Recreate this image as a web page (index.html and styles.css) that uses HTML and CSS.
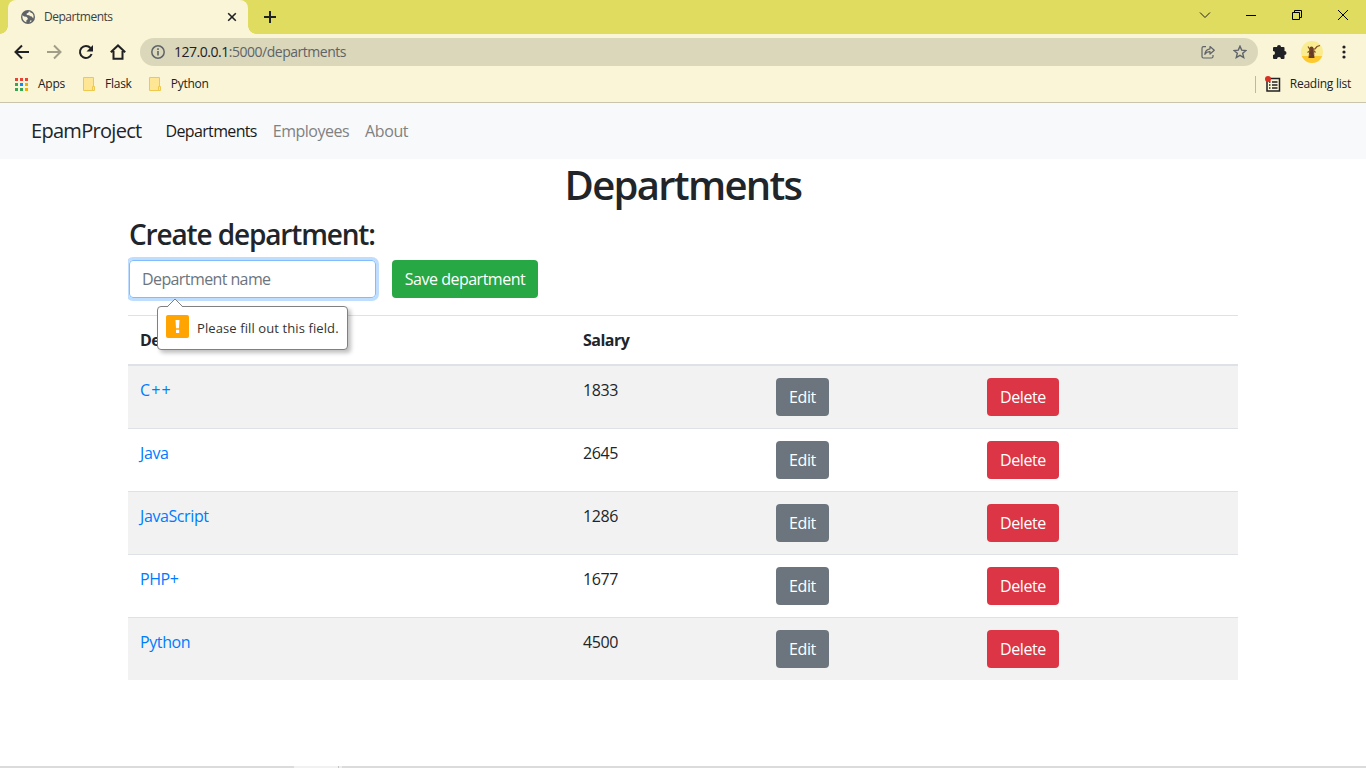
FILE: index.html
```html
<!DOCTYPE html>
<html lang="en">
<head>
<meta charset="utf-8">
<title>Departments</title>
<link rel="stylesheet" href="styles.css">
</head>
<body>
<div class="window">
  <header class="tabstrip">
    <div class="tab">
      <svg class="globe" width="14" height="14" viewBox="0 0 14 14"><circle cx="7" cy="7" r="7" fill="#5f6368"/><path d="M1.4 5.2 3.2 6.6 5.4 6.8 6.8 8.2 6.6 9.6 5.4 10.2 5.3 12.3C3 11.6 1.4 9.5 1.4 7zM7.8 1.4 7.2 3 5.6 3.6 5.8 5 8 5.2 9.4 6.2 10.8 6.4 12.2 8.4C12.9 6 12.6 4.600 11 2.900L9.600 2.800 9.300 1.700zM8.500 12.400 10.800 11 9.700 10z" fill="#faf5d6"/></svg>
      <span class="tab-title">Departments</span>
      <svg class="tab-close" width="10" height="10" viewBox="0 0 10 10"><path d="M1.200 1.200 8.800 8.800M8.800 1.200 1.200 8.800" stroke="#202124" stroke-width="1.600"/></svg>
    </div>
    <svg class="new-tab" width="12" height="12" viewBox="0 0 12 12"><path d="M6 0V12M0 6H12" stroke="#202124" stroke-width="2"/></svg>
    <div class="captions">
      <svg width="12" height="12" viewBox="0 0 12 12"><path d="M1 3.500 6 8.500 11 3.500" fill="none" stroke="#222"/></svg>
      <svg width="12" height="12" viewBox="0 0 12 12"><path d="M1 6.500H11" stroke="#000"/></svg>
      <svg width="12" height="12" viewBox="0 0 12 12"><path d="M1.500 3.500H8.500V10.500H1.500zM3.500 3.500V1.500H10.500V8.500H8.500" fill="none" stroke="#000"/></svg>
      <svg width="12" height="12" viewBox="0 0 12 12"><path d="M1 1 11 11M11 1 1 11" stroke="#000"/></svg>
    </div>
  </header>

  <div class="toolbar">
    <svg width="16" height="16" viewBox="0 0 16 16"><path d="M15 8H2M8 1.500 1.500 8 8 14.500" fill="none" stroke="#202124" stroke-width="2"/></svg>
    <svg width="16" height="16" viewBox="0 0 16 16"><path d="M1 8H14M8 1.500 14.500 8 8 14.500" fill="none" stroke="#a09d89" stroke-width="2"/></svg>
    <svg width="16" height="16" viewBox="0 0 16 16"><path d="M13.600 10A6 6 0 1 1 12.500 4" fill="none" stroke="#202124" stroke-width="2"/><path d="M15 1V7.500H8.500z" fill="#202124"/></svg>
    <svg width="16" height="16" viewBox="0 0 16 16"><path d="M.8 8.300 8 1.500 15.200 8.300M3.500 7V14.800H12.500V7" fill="none" stroke="#202124" stroke-width="2"/></svg>
    <div class="omnibox">
      <svg width="14" height="14" viewBox="0 0 14 14"><circle cx="7" cy="7" r="6.200" fill="none" stroke="#5f6368" stroke-width="1.500"/><path d="M7 6V10.500M7 3.300V4.900" stroke="#5f6368" stroke-width="1.600"/></svg>
      <span class="url"><b>127.0.0.1</b>:5000/departments</span>
      <svg class="share" width="14" height="14" viewBox="0 0 14 14"><path d="M5 1.700H2.500A1.500 1.500 0 0 0 1 3.200V11.500A1.500 1.500 0 0 0 2.500 13H10.500A1.500 1.500 0 0 0 12 11.500V10M9 1.500 13.300 5.200 9 9V6.700C6.500 6.600 5 7.500 3.800 9.300 4.200 6 6 4.200 9 3.800z" fill="none" stroke="#5f6368" stroke-width="1.200" stroke-linejoin="round"/></svg>
      <svg width="14" height="14" viewBox="0 0 14 14"><path d="M7 1.200 8.700 5.100 13 5.500 9.700 8.300 10.700 12.500 7 10.300 3.300 12.500 4.300 8.300 1 5.500 5.300 5.100z" fill="none" stroke="#5f6368" stroke-width="1.400"/></svg>
    </div>
    <svg class="puzzle" width="16" height="16" viewBox="0 0 16 16"><path d="M2 3H5A2 2 0 0 1 9 3H11.500A1 1 0 0 1 12.500 4V7A2 2 0 0 1 12.500 11V14A1 1 0 0 1 11.500 15H9A2 2 0 0 0 5 15H2A1 1 0 0 1 1 14V11A2 2 0 0 0 1 7V4A1 1 0 0 1 2 3z" fill="#202124"/></svg>
    <svg class="avatar" width="22" height="22" viewBox="0 0 22 22"><defs><clipPath id="disc"><circle cx="11" cy="11" r="11"/></clipPath></defs><g clip-path="url(#disc)"><path d="M0 0H22V22H0z" fill="#f9ec91"/><path d="M0 15H22V22H0z" fill="#fdc92e"/><path d="M8.500 8 12.500 8 13.500 17H7.500z" fill="#663c26"/><path d="M7 5.500 9 8.500 14 8 16 5.500 19 4.500M6.500 11.500 9.500 9.500M12.500 9.500 14.500 11.500" stroke="#86502e" stroke-width="1.300" fill="none"/><circle cx="10.500" cy="7.500" r="2" fill="#704128"/><path d="M8 14H9.500M12 13H13.500" stroke="#b95a32"/></g></svg>
    <svg class="dots" width="4" height="14" viewBox="0 0 4 14"><g fill="#202124"><circle cx="2" cy="2" r="1.600"/><circle cx="2" cy="7" r="1.600"/><circle cx="2" cy="12" r="1.600"/></g></svg>
  </div>

  <div class="bookmarks">
    <svg width="13" height="13" viewBox="0 0 13 13"><path d="M0 0H3V3H0zM5 0H8V3H5zM10 0H13V3H10z" fill="#ea4335"/><path d="M0 5H3V8H0zM0 10H3V13H0zM5 10H8V13H5z" fill="#34a853"/><path d="M5 5H8V8H5z" fill="#1a86f3"/><path d="M10 5H13V8H10zM10 10H13V13H10z" fill="#f4b000"/></svg>
    <span class="bm-apps">Apps</span>
    <svg width="12" height="14" viewBox="0 0 12 14"><path d="M.5.5H10.500V13.500H.5z" fill="#ffe694" stroke="#efc94c"/><path d="M9.500 9.500H11.500V13.500H9.500z" fill="#ffe694" stroke="#efc94c"/></svg>
    <span class="bm-flask">Flask</span>
    <svg width="12" height="14" viewBox="0 0 12 14"><path d="M.5.5H10.500V13.500H.5z" fill="#ffe694" stroke="#efc94c"/><path d="M9.500 9.500H11.500V13.500H9.500z" fill="#ffe694" stroke="#efc94c"/></svg>
    <span class="bm-python">Python</span>
    <div class="reading">
      <svg width="16" height="17" viewBox="0 0 16 17"><path d="M2 2.500H14.500V15H2z" fill="none" stroke="#202124" stroke-width="1.500"/><path d="M4 6H5.500M7 6H12.500M4 9H5.500M7 9H12.500M4 12H5.500M7 12H12.500" stroke="#202124" stroke-width="1.300"/><circle cx="3" cy="3" r="3" fill="#d93025"/></svg>
      <span class="bm-reading">Reading list</span>
    </div>
  </div>

  <nav class="navbar">
    <a class="brand">EpamProject</a>
    <a class="nav-link active">Departments</a>
    <a class="nav-link nav-employees">Employees</a>
    <a class="nav-link nav-about">About</a>
  </nav>

  <main class="container">
    <h1>Departments</h1>
    <h3>Create department:</h3>
    <form class="create">
      <div class="field">
        <div class="input"><span>Department name</span></div>
        <div class="bubble">
          <svg class="bubble-arrow" width="18" height="10" viewBox="0 0 18 10"><path d="M1 9.500 9 1 17 9.500V10H1z" fill="#fff"/><path d="M1 9 9 1 17 9" fill="none" stroke="#808080"/></svg>
          <svg class="warning" width="23" height="23" viewBox="0 0 23 23"><rect width="23" height="23" rx="2" fill="#ffa400"/><path d="M9.500 5H13.500L13 13.300H10zM10 14.700H13.200V18H10z" fill="#fff"/></svg>
          <span>Please fill out this field.</span>
        </div>
      </div>
      <span class="btn save">Save department</span>
    </form>

    <div class="table">
      <div class="row head"><b>Department</b><b class="salary">Salary</b></div>
      <div class="row"><a class="wide">C++</a><span>1833</span><div><span class="btn edit">Edit</span></div><div><span class="btn delete">Delete</span></div></div>
      <div class="row"><a>Java</a><span>2645</span><div><span class="btn edit">Edit</span></div><div><span class="btn delete">Delete</span></div></div>
      <div class="row"><a>JavaScript</a><span>1286</span><div><span class="btn edit">Edit</span></div><div><span class="btn delete">Delete</span></div></div>
      <div class="row"><a>PHP+</a><span>1677</span><div><span class="btn edit">Edit</span></div><div><span class="btn delete">Delete</span></div></div>
      <div class="row"><a>Python</a><span>4500</span><div><span class="btn edit">Edit</span></div><div><span class="btn delete">Delete</span></div></div>
    </div>
  </main>
  <footer class="edge"><i></i></footer>
</div>
</body>
</html>
```
FILE: styles.css
```css
* { box-sizing: border-box; }
body { margin: 0; background: #fff; color: #212529; font: 16px/24px "Open Sans", "Noto Sans", sans-serif; }
svg { display: block; flex: none; }
.window { width: 1366px; height: 768px; overflow: hidden; display: flex; flex-direction: column; white-space: nowrap; }

.tabstrip { height: 34px; flex: none; background: radial-gradient(circle at 0 0, transparent 7.5px, #faf5d6 8px) 0 26px / 8px 8px no-repeat, radial-gradient(circle at 100% 0, transparent 7.5px, #faf5d6 8px) 248px 26px / 8px 8px no-repeat, #dfdc5f; display: flex; align-items: center; padding-left: 8px; }
.tab { width: 240px; height: 34px; display: flex; align-items: center; padding: 0 11px 0 13px; background: #faf5d6; border-radius: 8px 8px 0 0; }
.tab-title { margin-left: 9px; font-size: 12px; letter-spacing: -.48px; color: #3c4043; }
.tab-close { margin-left: auto; }
.new-tab { margin-left: 16px; }
.captions { display: flex; gap: 34px; margin: -5px 17px 0 auto; }

.toolbar { height: 36px; flex: none; display: flex; align-items: center; gap: 16px; padding: 0 20px 0 14px; background: #faf5d6; }
.omnibox { height: 28px; flex: none; width: 1118px; margin-left: -2px; border-radius: 14px; background: #dad7bb; display: flex; align-items: center; padding: 0 11px; }
.url { margin-left: 9px; font-size: 14px; letter-spacing: -.48px; color: #5f6368; }
.url b { font-weight: 400; color: #202124; }
.share { margin: 0 18px 0 auto; }
.puzzle { margin-left: -2px; }
.avatar { margin-left: -3px; }
.dots { margin-left: 3px; }

.bookmarks { height: 33px; flex: none; display: flex; align-items: center; padding: 0 15px 4px 15px; background: #faf5d6; border-bottom: 1px solid #c8c5ac; font-size: 12px; color: #202124; letter-spacing: -.25px; }
.bookmarks > span { margin: 0 18px 0 10px; }
.bookmarks > .bm-flask { margin-right: 17px; }
.reading { margin-left: auto; height: 17px; border-left: 1px solid #bcb9a2; display: flex; align-items: center; gap: 9px; padding-left: 9px; }

.navbar { height: 56px; flex: none; background: #f8f9fa; display: flex; align-items: center; padding: 0 0 0 31px; gap: 16px; }
.brand { font-size: 20px; letter-spacing: -.7px; margin-right: 8px; }
.nav-link { color: #808182; letter-spacing: -.5px; }
.nav-link.active { color: #1a1a1b; letter-spacing: -.65px; }
.nav-about { letter-spacing: -.4px; }

.container { width: 1110px; margin: 0 auto; padding-top: 2px; flex: 1; }
h1 { margin: 0 0 8px; font-size: 40px; line-height: 48px; font-weight: 600; text-align: center; letter-spacing: -1.7px; }
h3 { margin: 0 0 9px; padding-left: 1px; font-size: 28px; line-height: 34px; font-weight: 600; letter-spacing: -1.15px; }
.create { display: flex; gap: 16px; margin: 0; padding-left: 1px; }
.field { position: relative; clip-path: inset(-4px -4px -60px -1px); }
.input { width: 247px; height: 38px; border: 1px solid #80bdff; border-radius: 4px; box-shadow: 0 0 0 3px #bfdeff; padding: 6px 12px; color: #6c757d; letter-spacing: -.6px; }
.btn { display: inline-block; height: 38px; padding: 7px 0; border-radius: 4px; color: #fff; text-align: center; letter-spacing: -.4px; }
.save { width: 146px; background: #28a745; letter-spacing: -.5px; }
.bubble { position: absolute; z-index: 2; left: 28px; top: 46px; width: 191px; height: 44px; background: #fff; border: 1px solid #808080; border-radius: 4px; box-shadow: 3px 3px 4px rgba(0,0,0,.25); display: flex; align-items: center; gap: 8px; padding: 0 8px; font-size: 13px; letter-spacing: .1px; color: #333; }
.bubble-arrow { position: absolute; left: 8px; top: -9px; }
.warning { margin-bottom: 3px; }

.table { margin-top: 17px; }
.row { display: grid; grid-template-columns: 443px 193px 211px 263px; height: 63px; border-top: 1px solid #dee2e6; padding: 12px 0; }
.row > * { padding-left: 12px; }
.row > a { color: #007bff; }
.row > a, .row > span { letter-spacing: -.4px; }
.row > .wide { letter-spacing: 1.1px; }
.head { height: 51px; border-bottom: 2px solid #dee2e6; letter-spacing: -.5px; }
.head + .row { height: 62px; border-top: 0; }
.row:nth-child(even) { background: #f2f2f2; }
.edit { width: 53px; background: #6c757d; }
.delete { width: 72px; background: #dc3545; }

.edge { height: 2px; flex: none; background: #dbdbdb; }
.edge i { display: block; width: 48px; height: 2px; margin-left: 294px; background: linear-gradient(90deg, #f1f1f1 44px, #c4c4c4 44px 45px, #eee 45px); }
```
